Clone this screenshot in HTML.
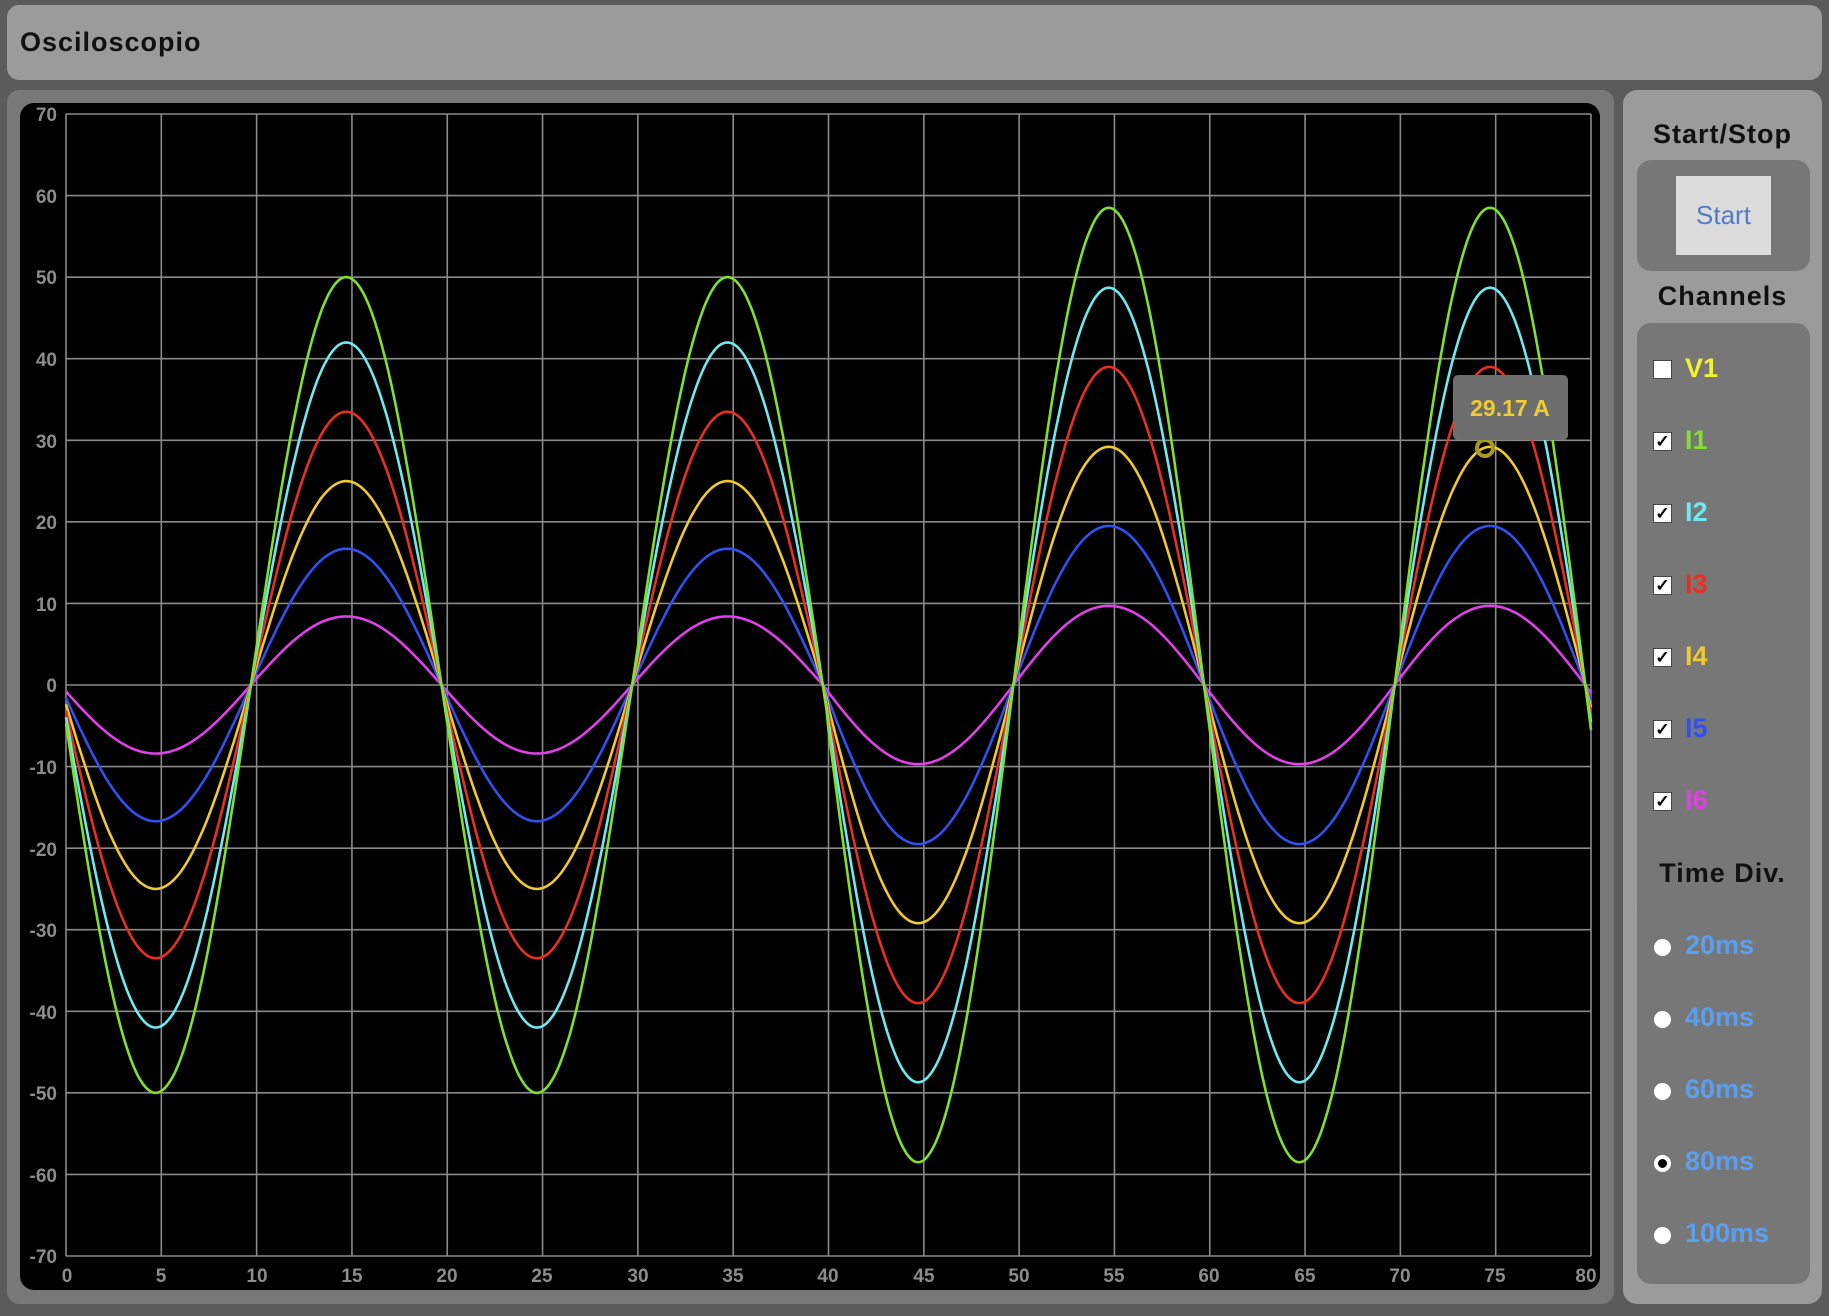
<!DOCTYPE html>
<html><head><meta charset="utf-8"><style>
*{margin:0;padding:0;box-sizing:border-box}
body{width:1829px;height:1316px;background:#5b5b5b;font-family:"Liberation Sans",Arial,sans-serif;position:relative;overflow:hidden}
.hdr{position:absolute;left:7px;top:5px;width:1815px;height:75px;background:#9b9b9b;border-radius:12px}
.hdr span{position:absolute;left:13px;top:22px;font-size:27px;font-weight:bold;color:#111;letter-spacing:1px}
.cp{position:absolute;left:7px;top:90px;width:1607px;height:1214px;background:#787878;border-radius:12px}
.plot{position:absolute;left:20px;top:103px;width:1580px;height:1187px;background:#000;border-radius:14px}
svg{position:absolute;left:0;top:0}
.rp{position:absolute;left:1623px;top:90px;width:199px;height:1214px;background:#9b9b9b;border-radius:14px}
.t{position:absolute;left:0;width:199px;text-align:center;font-size:27px;font-weight:bold;color:#111;letter-spacing:1px}
.box{position:absolute;left:14px;width:173px;background:#777;border-radius:14px}
.btn{position:absolute;left:39px;top:16px;width:95px;height:79px;background:#dcdcdc;color:#4f7cc4;font-size:26px;text-align:center;line-height:79px}
.cb{position:absolute;left:16px;width:19px;height:19px;background:#fff;border:1px solid #444;font-size:17px;line-height:17px;text-align:center;color:#000;font-weight:bold}
.lbl{position:absolute;left:48px;font-size:27px;font-weight:bold}
.rd{position:absolute;left:17px;width:17px;height:17px;border-radius:50%;background:#fff}
.rl{position:absolute;left:48px;font-size:27px;font-weight:bold;color:#5b9ff0}
</style></head><body>
<div class="hdr"><span>Osciloscopio</span></div>
<div class="cp"></div>
<div class="plot"></div>
<svg width="1829" height="1316" id="s">
<g id="grid" stroke="#8a8a8a" stroke-width="1.6"></g>
<g font-family="Liberation Sans,Arial,sans-serif" font-size="19" font-weight="bold" fill="#8c8c8c" text-anchor="end">
<text x="57" y="121">70</text><text x="57" y="203">60</text><text x="57" y="284">50</text><text x="57" y="366">40</text><text x="57" y="448">30</text><text x="57" y="529">20</text><text x="57" y="611">10</text><text x="57" y="692">0</text><text x="57" y="774">-10</text><text x="57" y="856">-20</text><text x="57" y="937">-30</text><text x="57" y="1019">-40</text><text x="57" y="1100">-50</text><text x="57" y="1182">-60</text><text x="57" y="1263">-70</text>
</g>
<g font-family="Liberation Sans,Arial,sans-serif" font-size="19" font-weight="bold" fill="#8c8c8c" text-anchor="middle">
<text x="67" y="1282">0</text><text x="161" y="1282">5</text><text x="257" y="1282">10</text><text x="352" y="1282">15</text><text x="447" y="1282">20</text><text x="542" y="1282">25</text><text x="638" y="1282">30</text><text x="733" y="1282">35</text><text x="828" y="1282">40</text><text x="924" y="1282">45</text><text x="1019" y="1282">50</text><text x="1114" y="1282">55</text><text x="1209" y="1282">60</text><text x="1305" y="1282">65</text><text x="1400" y="1282">70</text><text x="1495" y="1282">75</text><text x="1586" y="1282">80</text>
</g>
<g id="waves" fill="none" stroke-width="2.6"></g>
<circle cx="1485" cy="448" r="8" fill="none" stroke="#a89a20" stroke-width="4"/>
<rect x="1453" y="375" width="115" height="65" rx="5" fill="#6e6e6e"/>
<text x="1510" y="416" text-anchor="middle" font-family="Liberation Sans,Arial,sans-serif" font-size="23" font-weight="bold" fill="#f0cc30">29.17 A</text>
</svg>
<div class="rp">
<div class="t" style="top:29px">Start/Stop</div>
<div class="box" style="top:70px;height:111px"><div class="btn">Start</div></div>
<div class="t" style="top:191px">Channels</div>
<div class="box" style="top:233px;height:613px">
<div class="cb" style="top:37px"></div><div class="lbl" style="top:30px;color:#f2f230">V1</div>
<div class="cb" style="top:109px">✓</div><div class="lbl" style="top:102px;color:#80e030">I1</div>
<div class="cb" style="top:181px">✓</div><div class="lbl" style="top:174px;color:#70e8f0">I2</div>
<div class="cb" style="top:253px">✓</div><div class="lbl" style="top:246px;color:#e83020">I3</div>
<div class="cb" style="top:325px">✓</div><div class="lbl" style="top:318px;color:#f0c830">I4</div>
<div class="cb" style="top:397px">✓</div><div class="lbl" style="top:390px;color:#3050f0">I5</div>
<div class="cb" style="top:469px">✓</div><div class="lbl" style="top:462px;color:#e040e8">I6</div>
</div>
<div class="t" style="top:768px">Time Div.</div>
<div class="box" style="top:812px;height:382px">
<div class="rd" style="top:37px"></div><div class="rl" style="top:28px">20ms</div>
<div class="rd" style="top:109px"></div><div class="rl" style="top:100px">40ms</div>
<div class="rd" style="top:181px"></div><div class="rl" style="top:172px">60ms</div>
<div class="rd" style="top:253px;border:4px solid #fff;background:#000"></div><div class="rl" style="top:244px">80ms</div>
<div class="rd" style="top:325px"></div><div class="rl" style="top:316px">100ms</div>
</div>
</div>
<script>
var NS="http://www.w3.org/2000/svg";
var g=document.getElementById("grid");
function ln(x1,y1,x2,y2){var l=document.createElementNS(NS,"line");l.setAttribute("x1",x1);l.setAttribute("y1",y1);l.setAttribute("x2",x2);l.setAttribute("y2",y2);g.appendChild(l);}
for(var i=0;i<=16;i++){var x=66+i*1525/16;ln(x,114,x,1256);}
for(var j=0;j<=14;j++){var y=114+j*1142/14;ln(66,y,1591,y);}
var w=document.getElementById("waves");
var ch=[["#e040e8",8.4,9.7],["#3050f0",16.7,19.5],["#f0c830",25,29.2],["#e83020",33.5,39],["#70e8f0",42,48.7],["#80e030",50,58.5]];
ch.forEach(function(c){var d="";for(var k=0;k<=800;k++){var t=k/10;var A=t<40?c[1]:c[2];var v=A*Math.sin(2*Math.PI*(t-9.7)/20);var px=66+t*1525/80,py=685-v*1142/140;d+=(k?"L":"M")+px.toFixed(1)+" "+py.toFixed(1);}
var p=document.createElementNS(NS,"path");p.setAttribute("d",d);p.setAttribute("stroke",c[0]);w.appendChild(p);});
</script>
</body></html>
